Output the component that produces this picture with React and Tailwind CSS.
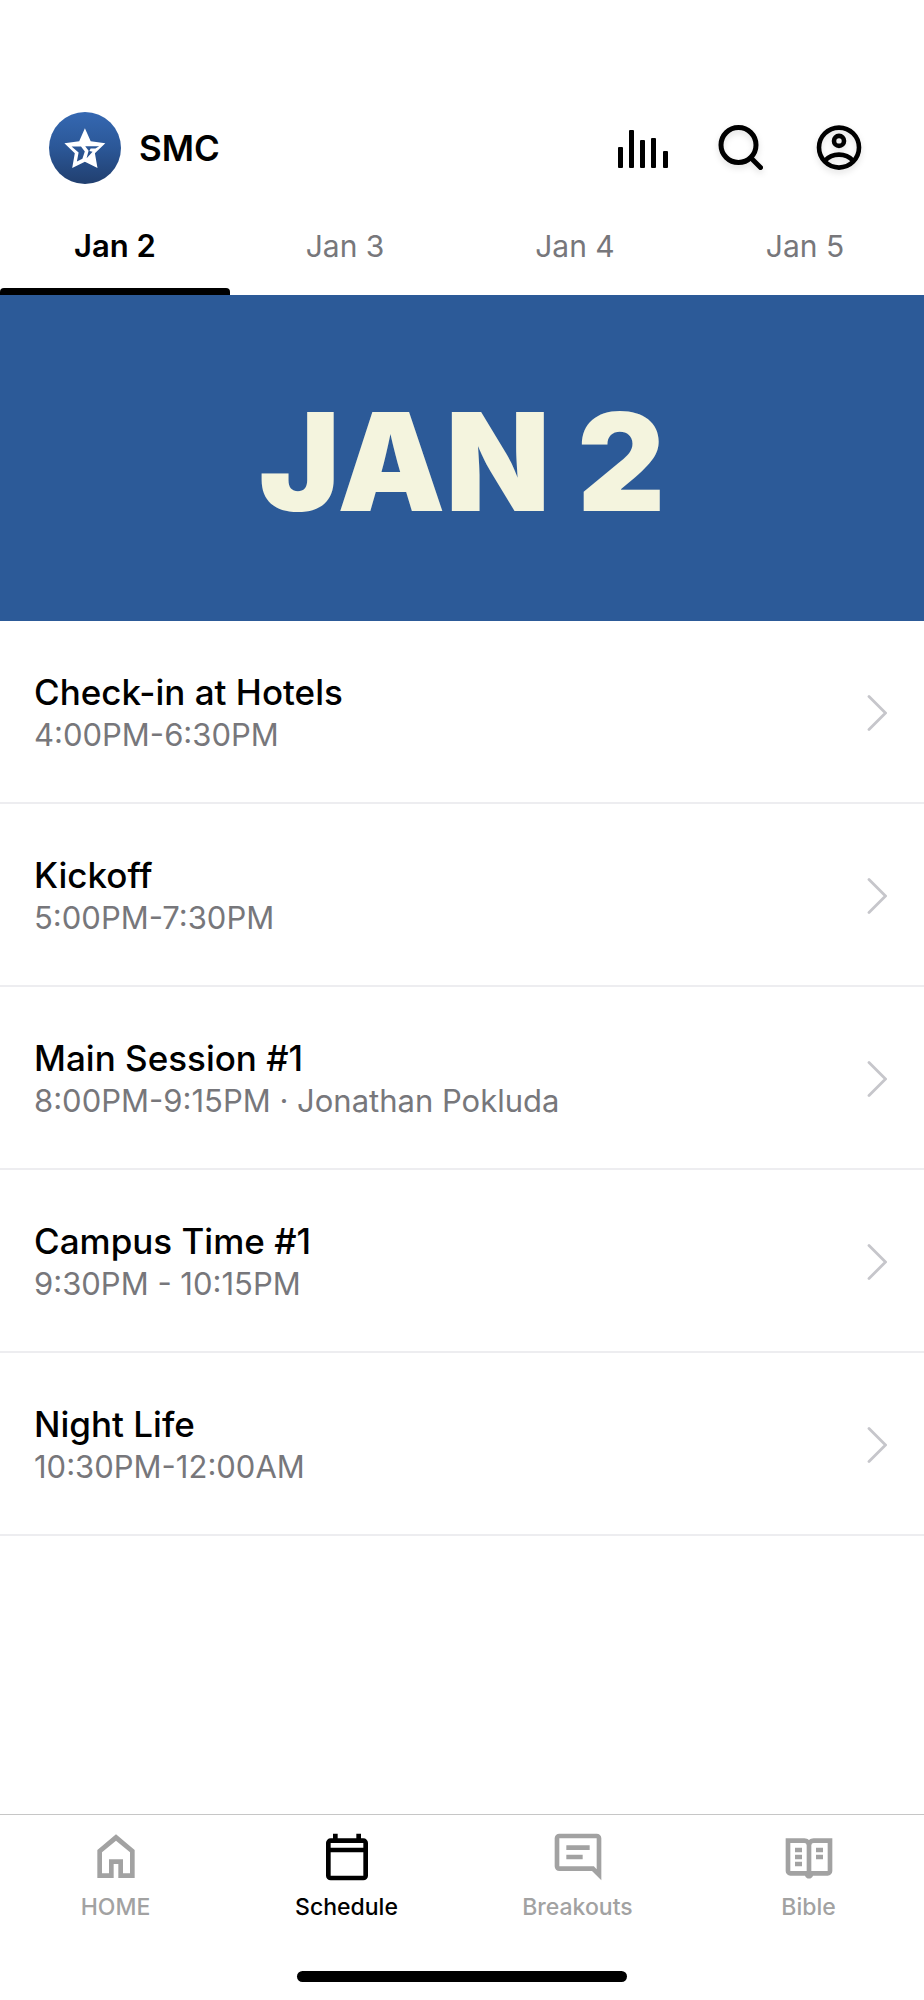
import React, { useState } from 'react';

const days = ['Jan 2', 'Jan 3', 'Jan 4', 'Jan 5'];

const events = [
  { title: 'Check-in at Hotels', details: '4:00PM-6:30PM' },
  { title: 'Kickoff', details: '5:00PM-7:30PM' },
  { title: 'Main Session #1', details: '8:00PM-9:15PM · Jonathan Pokluda' },
  { title: 'Campus Time #1', details: '9:30PM - 10:15PM' },
  { title: 'Night Life', details: '10:30PM-12:00AM' },
];

const tabs = [
  { name: 'HOME', path: 'M12 2.3L4 9v12h7v-6h2v6h7V9zM6 10l6-5 6 5v9h-3v-6H9v6H6z' },
  {
    name: 'Schedule',
    path: 'M6 2h2v2h8V2h2v2h1a2 2 0 0 1 2 2v14a2 2 0 0 1-2 2H5a2 2 0 0 1-2-2V6a2 2 0 0 1 2-2h1zM5 6v2h14V6zM5 10v10h14V10z',
  },
  {
    name: 'Breakouts',
    path: 'M4 2h16a2 2 0 0 1 2 2v18l-4-4H4a2 2 0 0 1-2-2V4a2 2 0 0 1 2-2zM4 4v12h14.8l1.2 1.2V4zM7 7h10v2H7zM7 11h7v2H7z',
  },
  {
    name: 'Bible',
    path: 'M2 4h8c.8 0 1.5.3 2 .8.5-.5 1.2-.8 2-.8h8v14a2 2 0 0 1-2 2h-6.3a1.8 1.8 0 0 1-3.4 0H4a2 2 0 0 1-2-2zM4 6v12h7V7a1 1 0 0 0-1-1zM14 6a1 1 0 0 0-1 1v11h7V6zM6 8h3v2H6zM6 11h3v2H6zM6 14h3v2H6zM15 8h3v2h-3zM15 11h3v2h-3z',
  },
];

const Logo = () => (
  <svg viewBox="0 0 72 72" className="size-18 shrink-0" aria-hidden="true">
    <defs>
      <linearGradient id="logo-bg" x1="0" y1="0" x2="0" y2="1">
        <stop offset="0" stopColor="#3568b2" />
        <stop offset="0.5" stopColor="#2b5797" />
        <stop offset="1" stopColor="#213f6f" />
      </linearGradient>
    </defs>
    <circle cx="36" cy="36" r="36" fill="url(#logo-bg)" />
    <path
      fill="#fff"
      fillRule="evenodd"
      d="M35.9 16.3L41.7 29.3 56.3 31.2 45.9 41.3 48.5 56 35.9 49.8 23.2 56 25.8 41.3 15.4 31.2 30.2 29.3zM22.6 34.4L29.6 40.4 27.9 49.5 33.4 46.8 35.8 39.6 32 34.4zM36.2 34.2L39.6 38.8 37.6 46.3 43.6 39.8 40.4 39 41.6 36.4 46.4 36.4 50.2 34.2z"
    />
  </svg>
);

const Header = () => (
  <header className="flex items-center justify-between pt-28 pl-[49px] pr-[60px]">
    <div className="flex items-center gap-[18px]">
      <Logo />
      <h1 className="text-[35px] leading-[44px] font-semibold">SMC</h1>
    </div>
    <div className="flex items-center gap-12">
      <button type="button" aria-label="Now playing">
        <svg viewBox="0 0 50 50" className="size-[50px]" fill="currentColor">
          <rect x="0" y="24" width="5" height="21" rx="1" />
          <rect x="11" y="7" width="5" height="38" rx="1" />
          <rect x="22" y="17" width="5" height="28" rx="1" />
          <rect x="33" y="15" width="5" height="30" rx="1" />
          <rect x="45" y="28" width="5" height="17" rx="1" />
        </svg>
      </button>
      <button type="button" aria-label="Search">
        <svg
          viewBox="0 0 50 50"
          className="size-[50px] overflow-visible drop-shadow-md"
          fill="none"
          stroke="currentColor"
          strokeWidth="5"
          strokeLinecap="round"
        >
          <circle cx="22.5" cy="22" r="17.5" />
          <path d="M35 35L44.5 44.5" />
        </svg>
      </button>
      <button type="button" aria-label="Profile">
        <svg
          viewBox="0 0 50 50"
          className="size-[50px] overflow-visible drop-shadow-md"
          fill="none"
          stroke="currentColor"
          strokeWidth="4.6"
        >
          <circle cx="25" cy="24.6" r="20" />
          <circle cx="25" cy="17.9" r="5" />
          <path d="M10.8 37.8C14.6 33.7 19.5 31.6 25 31.6s10.4 2.1 14.2 6.2" />
        </svg>
      </button>
    </div>
  </header>
);

const App = () => {
  const [day, setDay] = useState('Jan 2');
  const [activeTab, setActiveTab] = useState('Schedule');

  return (
    <div className="flex min-h-screen flex-col bg-white font-['Inter',sans-serif] text-black">
      <Header />

      {/* Day picker */}
      <nav className="grid grid-cols-4 pr-1" aria-label="Days">
        {days.map((name) => (
          <button
            key={name}
            type="button"
            onClick={() => setDay(name)}
            className={`pt-10 leading-[44px] ${day === name ? 'text-[31px] font-semibold' : 'text-[30px] text-[#77777b]'}`}
          >
            {name}
            <span className={`mt-5 block h-[7px] rounded-t-sm ${day === name ? 'bg-black' : ''}`} />
          </button>
        ))}
      </nav>

      {/* Banner */}
      <div className="flex h-[326px] items-center justify-center bg-[#2c5a98] pt-2">
        <h2 className="text-[136px] leading-none font-black text-[#f4f4de] uppercase">{day}</h2>
      </div>

      {/* Sessions */}
      <ul>
        {events.map((event) => (
          <li key={event.title} className="border-b-2 border-[#ededf0]">
            <a href="#" className="flex items-center justify-between pt-[50px] pr-[37px] pb-[47px] pl-[34px]">
              <div>
                <h3 className="text-[35px] leading-[42px] font-medium">{event.title}</h3>
                <p className="mt-0.5 text-[31px] leading-10 text-[#77777b]">{event.details}</p>
              </div>
              <svg viewBox="0 0 20 36" className="h-9 w-5 shrink-0" fill="none" stroke="#c6c6cb" strokeWidth="2.8" strokeLinecap="round">
                <path d="M2 1.5L18.5 18 2 34.5" />
              </svg>
            </a>
          </li>
        ))}
      </ul>

      {/* Tab bar */}
      <footer className="mt-auto border-t border-[#c6c6c6] pt-3.5">
        <nav className="grid grid-cols-4" aria-label="Main">
          {tabs.map((tab) => (
            <button
              key={tab.name}
              type="button"
              onClick={() => setActiveTab(tab.name)}
              className={`flex flex-col items-center gap-1.5 text-[23px] leading-8 font-medium ${
                activeTab === tab.name ? 'text-black' : 'text-[#a2a2a2]'
              }`}
            >
              <svg viewBox="0 0 24 24" className="size-14" fill="currentColor" fillRule="evenodd">
                <path d={tab.path} />
              </svg>
              {tab.name}
            </button>
          ))}
        </nav>
        <div className="mx-auto mt-12 mb-[18px] h-[11px] w-[330px] rounded-full bg-black" />
      </footer>
    </div>
  );
};

export default App;
